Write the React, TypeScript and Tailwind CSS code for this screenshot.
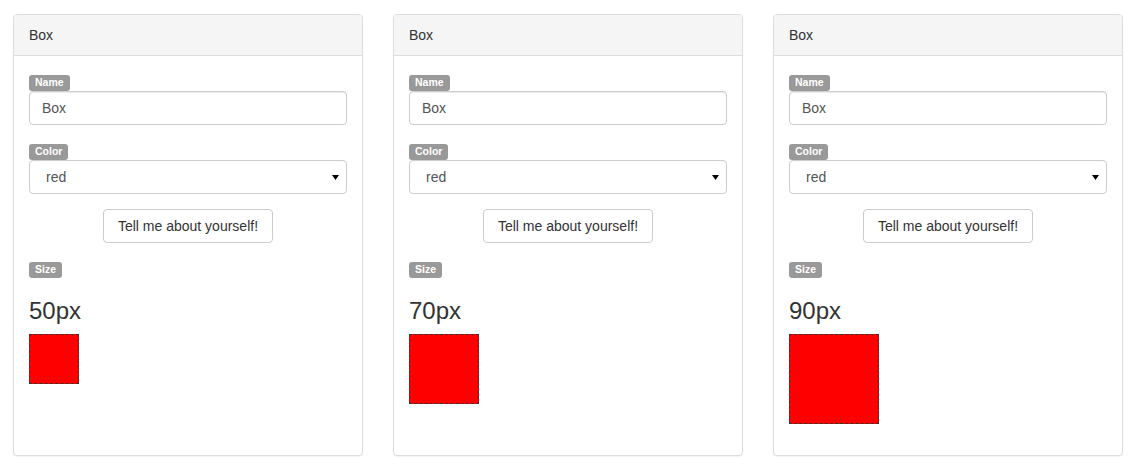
import React from "react";

type TBox = {
  name: string;
  color: string;
  size: number;
};

const boxes: TBox[] = [
  { name: "Box", color: "red", size: 50 },
  { name: "Box", color: "red", size: 70 },
  { name: "Box", color: "red", size: 90 },
];

const Tag = ({ children }: { children: React.ReactNode }) => (
  <div className="h-5 flex items-start pt-[4px]">
    <span className="inline-block bg-[#999999] text-white text-[10.5px] font-bold leading-none px-[6px] pt-[2px] pb-[3px] rounded-[3px]">
      {children}
    </span>
  </div>
);

const BoxPanel = ({ box }: { box: TBox }) => {
  return (
    <div className="w-[350px] h-[442px] bg-white border border-[#dddddd] rounded-[4px] shadow-[0_1px_1px_rgba(0,0,0,0.05)] overflow-hidden">
      <div className="h-[41px] bg-[#f5f5f5] border-b border-[#dddddd] px-[15px] flex items-center text-[14px] text-[#333333]">
        {box.name}
      </div>
      <div className="p-[15px]">
        <Tag>Name</Tag>
        <div className="h-[34px] border border-[#cccccc] rounded-[4px] px-3 flex items-center text-[14px] text-[#555555] shadow-[inset_0_1px_1px_rgba(0,0,0,0.075)]">
          {box.name}
        </div>

        <div className="mt-[15px]">
          <Tag>Color</Tag>
          <div className="h-[34px] border border-[#cccccc] rounded-[4px] pl-4 pr-[7px] flex items-center justify-between text-[14px] text-[#555555]">
            <span>{box.color}</span>
            <svg width="7" height="5" viewBox="0 0 7 5">
              <path d="M0 0 H7 L3.5 5 Z" fill="#000" />
            </svg>
          </div>
        </div>

        <div className="mt-[15px] flex justify-center">
          <button className="h-[34px] px-[14px] bg-white border border-[#cccccc] rounded-[4px] text-[14px] text-[#333333]">
            Tell me about yourself!
          </button>
        </div>

        <div className="mt-[15px]">
          <Tag>Size</Tag>
          <h3 className="mt-5 mb-[10px] text-[24px] leading-[1.1] font-medium text-[#333333]">
            {box.size}px
          </h3>
          <div
            className="bg-[#ff0000] border border-dashed border-[#333333]"
            style={{ width: box.size, height: box.size }}
          ></div>
        </div>
      </div>
    </div>
  );
};

const App = () => {
  return (
    <div
      className="w-[1135px] h-[475px] bg-white pt-[14px] pl-[13px] flex gap-[30px] items-start"
      style={{ fontFamily: '"Liberation Sans", Arial, sans-serif' }}
    >
      {boxes.map((box, i) => (
        <BoxPanel key={i} box={box} />
      ))}
    </div>
  );
};

export default App;
